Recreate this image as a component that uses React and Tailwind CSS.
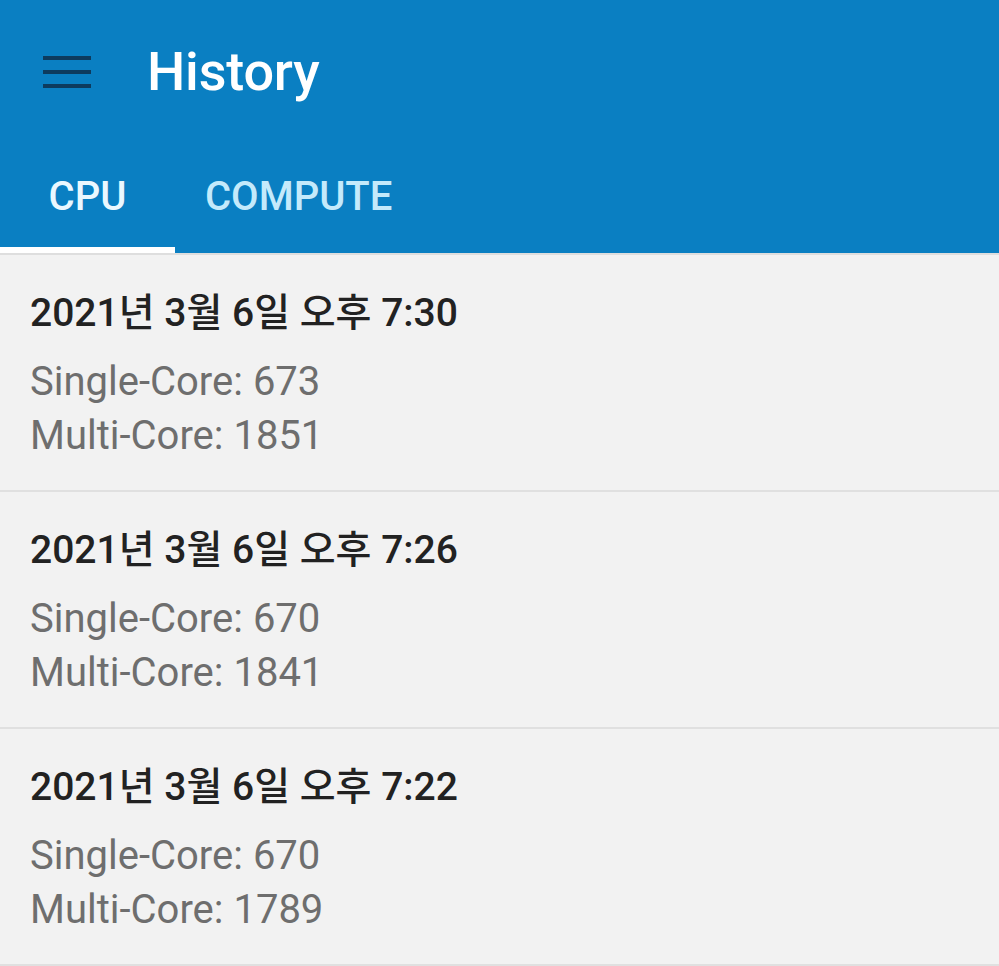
import React from 'react';

const records = [
    { date: '2021년 3월 6일 오후 7:30', single: 673, multi: 1851 },
    { date: '2021년 3월 6일 오후 7:26', single: 670, multi: 1841 },
    { date: '2021년 3월 6일 오후 7:22', single: 670, multi: 1789 },
];

const font = { fontFamily: "Roboto, 'Noto Sans CJK KR', sans-serif" };

function MenuIcon() {
    return (
        <svg width="48" height="34" viewBox="0 0 48 34" className="shrink-0">
            <rect x="0" y="1" width="48" height="4" fill="#0d3b5e" />
            <rect x="0" y="15" width="48" height="4" fill="#0d3b5e" />
            <rect x="0" y="29" width="48" height="4" fill="#0d3b5e" />
        </svg>
    );
}

export default function App() {
    return (
        <div className="w-[999px] h-[966px] overflow-hidden bg-[#f2f2f2]" style={font}>
            {/* App bar */}
            <div className="bg-[#0a7fc2]">
                <div className="h-[146px] flex items-center pl-[43px] pb-[3px]">
                    <MenuIcon />
                    <h1 className="ml-[56px] text-[54px] font-medium text-white tracking-[-0.2px]">History</h1>
                </div>

                {/* Tabs */}
                <div className="h-[107px] flex">
                    <div className="w-[175px] flex flex-col">
                        <div className="flex-1 flex items-center justify-center">
                            <span className="text-[40px] font-medium text-[#eaf8ff]">CPU</span>
                        </div>
                        <div className="h-[6px] bg-white" />
                    </div>
                    <div className="flex flex-col px-[30px]">
                        <div className="flex-1 flex items-center justify-center pb-[5px]">
                            <span className="text-[40px] font-medium text-[#c4eafb]">COMPUTE</span>
                        </div>
                    </div>
                </div>
            </div>
            <div className="h-[2px] bg-[#dedede]" />

            {/* List */}
            <div className="flex flex-col">
                {records.map((r, i) => (
                    <div key={i} className="h-[237px] border-b-2 border-[#e0e0e0] px-[30px] pt-[34px]">
                        <div className="text-[39px] font-medium text-[#222222] leading-[48px]">{r.date}</div>
                        <div className="mt-[18px] text-[40px] text-[#6e6e6e] leading-[54px]">
                            <div>Single-Core: {r.single}</div>
                            <div>Multi-Core: {r.multi}</div>
                        </div>
                    </div>
                ))}
            </div>
        </div>
    );
}
